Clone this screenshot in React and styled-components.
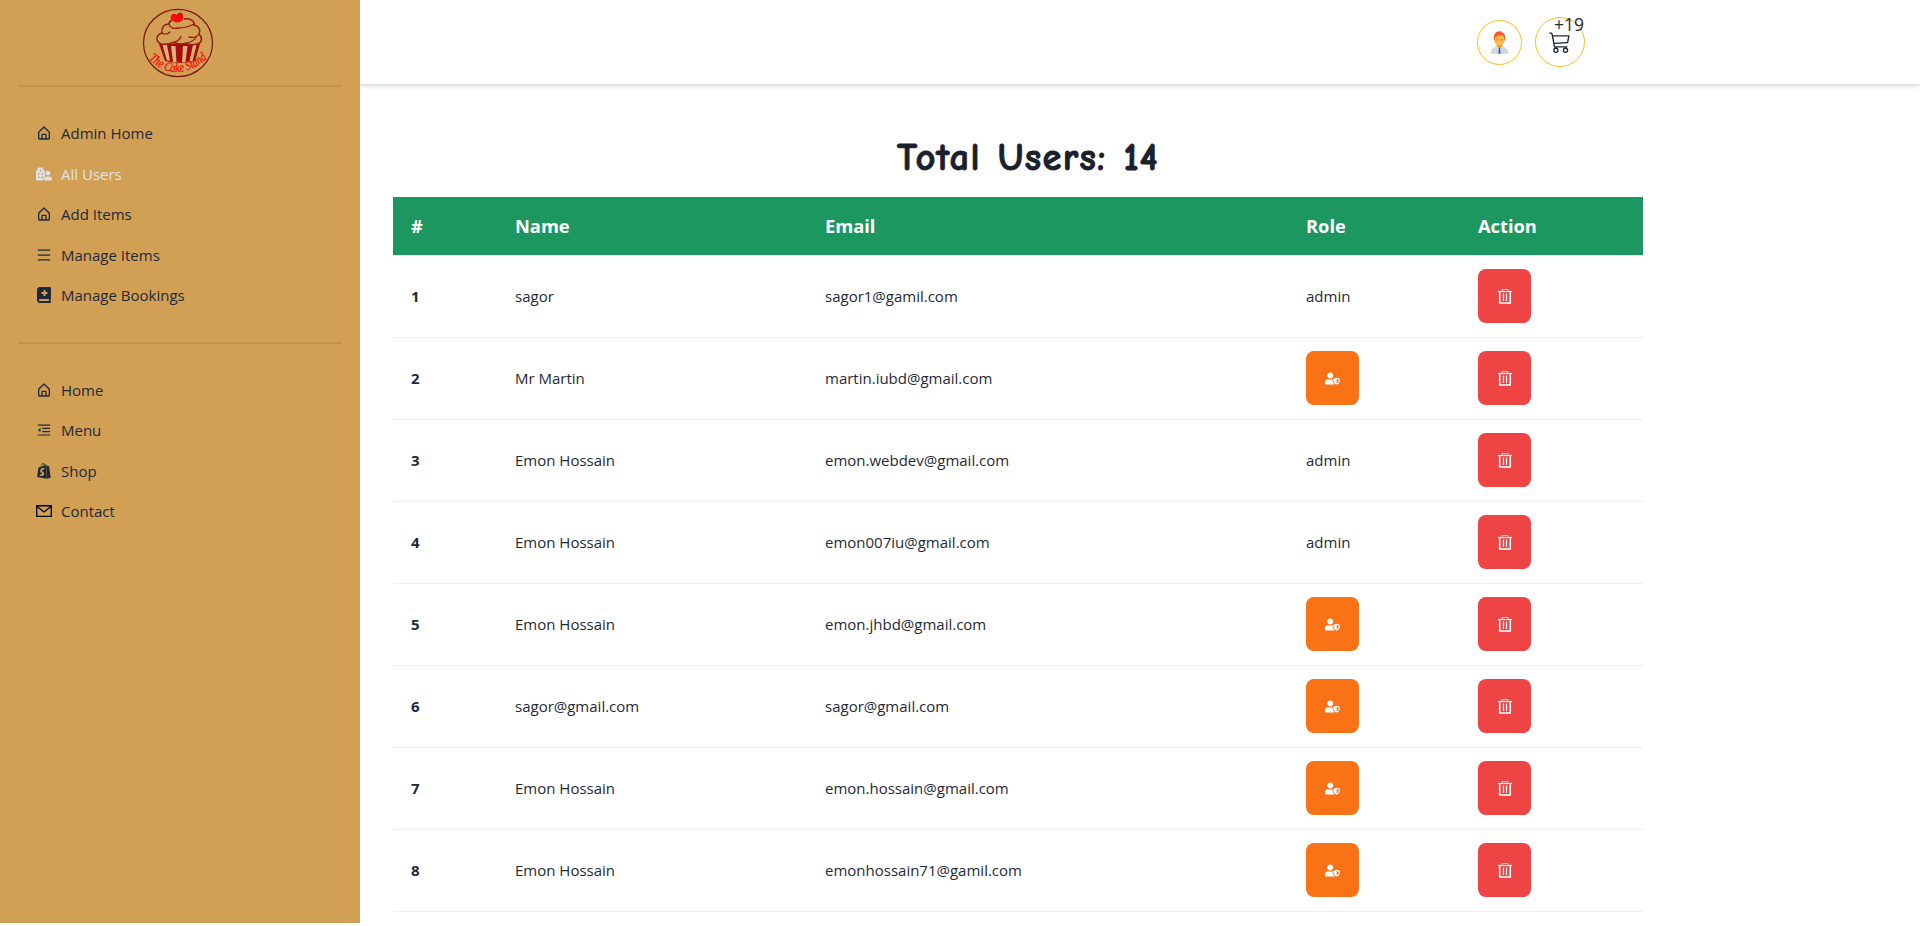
import React from 'react';
import styled, { createGlobalStyle } from 'styled-components';
import { AiOutlineMenu, AiOutlineMenuFold } from 'react-icons/ai';
import { BiHomeAlt } from 'react-icons/bi';
import { BsCart3 } from 'react-icons/bs';
import { FaBookMedical, FaHospitalUser, FaShopify, FaUserShield } from 'react-icons/fa';
import { FcManager } from 'react-icons/fc';

const GlobalStyle = createGlobalStyle`
  * { box-sizing: border-box; }
  body {
    margin: 0;
    height: 926px;
    overflow: hidden;
    background: #fff;
    color: #1f2937;
    font-family: "Segoe UI", "Open Sans", "Noto Sans", sans-serif;
    font-size: 15px;
    line-height: 24px;
  }
`;

const Page = styled.div`
  display: flex;
  align-items: flex-start;
  height: 926px;
  overflow: hidden;
`;

const Sidebar = styled.aside`
  flex: 0 0 360px;
  height: 923px;
  padding: 8px 18px 0;
  background: #d1a054;
`;

const LogoBox = styled.div`
  display: flex;
  justify-content: center;
  height: 77px;
  padding-right: 4px;
`;

const Divider = styled.hr`
  height: 2px;
  margin: 0;
  border: 0;
  background: #bf9451;
`;

const NavList = styled.ul`
  margin: 0;
  padding: 26px 18px;
  list-style: none;
`;

const NavItem = styled.li`
  display: flex;
  align-items: center;
  gap: 9px;
  height: 40.5px;
  color: ${(p) => (p.$active ? '#dfe1ea' : '#1f2937')};

  svg { flex: 0 0 16px; }
`;

const Main = styled.main`
  flex: 1;
  min-width: 0;
`;

const TopBar = styled.header`
  display: flex;
  align-items: center;
  justify-content: flex-end;
  gap: 13px;
  height: 84px;
  padding-right: 335px;
  box-shadow: 0 1px 5px rgba(0, 0, 0, 0.22);
  clip-path: inset(0 0 -10px 0);
`;

const RoundButton = styled.button`
  position: relative;
  display: flex;
  align-items: center;
  justify-content: center;
  width: ${(p) => p.$size}px;
  height: ${(p) => p.$size}px;
  padding: 0;
  border: 1px solid #fbbf24;
  border-radius: 50%;
  background: transparent;
  color: #1f2937;
`;

const Badge = styled.span`
  position: absolute;
  top: -6px;
  right: 0;
  font: 17.500px/24px "Open Sans", sans-serif;
`;

const Content = styled.section`
  width: 1283px;
  padding: 44px 0 0 33px;
`;

const Title = styled.h1`
  margin: 0 0 9px 20px;
  height: 60px;
  font: 700 38.5px/60px "Comic Sans MS", "Comic Neue", "Open Sans", cursive;
  letter-spacing: 1.3px;
  word-spacing: 2px;
  text-align: center;
  color: #1a202c;
  -webkit-text-stroke: 0.9px #1a202c;
`;

const Table = styled.div`
  display: flex;
  flex-direction: column;
`;

const Row = styled.div`
  display: grid;
  grid-template-columns: 104px 310px 481px 172px 1fr;
  align-items: center;
  height: 82px;
  padding-bottom: 1px;
  border-bottom: 1px solid #f0f0f1;

  > * { padding-left: 18px; }
`;

const HeadRow = styled(Row)`
  height: 59px;
  background: #1b975f;
  background-clip: padding-box;
  color: #fff;
  font-size: 18.3px;
  font-weight: 700;
`;

const Index = styled.span`
  font-weight: 700;
`;

const ActionButton = styled.button`
  display: flex;
  align-items: center;
  justify-content: center;
  width: 53px;
  height: 54px;
  padding: 0;
  border: 0;
  border-radius: 8px;
  background: ${(p) => (p.$tone === 'danger' ? '#ef4444' : '#f97316')};
  color: #fff;
`;

const LogoText = styled.text`
  font: italic 400 13px "Liberation Serif", serif;
  fill: #fa0908;
  stroke: #fa0908;
  stroke-width: 0.25px;
`;

const MailIcon = () => (
  <svg width="16" height="16" viewBox="0 0 16 16" fill="none" stroke="#000" strokeWidth="1.35">
    <path d="M.7 2.7h14.6v10.6H.7zM.7 3.2 8 9l7.3-5.8" />
  </svg>
);

const TrashIcon = () => (
  <svg width="16" height="16" viewBox="0 0 16 16" fill="none" stroke="#fff">
    <path d="M5 3V1.500h6V3" strokeOpacity=".7" />
    <path d="M1 3.5h14" strokeWidth="1.2" />
    <path d="M2.700 3.500v11.500h10.600V3.500" strokeWidth="1.500" />
    <path d="M6.500 5.500v7.500M9.500 5.500v7.500" strokeWidth="1.200" />
  </svg>
);

const CakeLogo = () => (
  <svg width="72" height="71" viewBox="0 0 72 71">
    <ellipse cx="36" cy="35" rx="34.5" ry="33.6" fill="none" stroke="#78140f" strokeWidth="1.2" />
    <path d="M17 36h41l-5 17q-15 3.500-30 0z" fill="#a60c0b" />
    <path d="M20.500 37l4.500 15.500h3l-3-15.500zM29 38l2 16h3.500l-1-16zM41 38l-1 16h3.500l2-16zM51 37l-3.500 16h3l4-16z" fill="#dcb27c" />
    <path d="M19 36c-6-3-5-9 1-11c-1-5 2-9 7-9c0-2 1-3 3-4M42 11c6-1 11 2 10 6c5 1 7 5 5 9c4 4 3 9-2 10c-5 2-9 0-12-.5c-5 1-9 0-12-1c-4 2-8 2-12 1.500" fill="#d1a054" stroke="#9b1b12" strokeWidth="1.500" />
    <path d="M20 25c3 2 6 1 8-1M27 16c1 4 5 5 9 4c6 0 11-1 16-4M57 26c-2 3-6 4-10 3M31 34.500c4-1 7-3 8-6M43 35.500c5-1 9-3 11-6" fill="none" stroke="#9b1b12" strokeWidth="1.300" strokeLinecap="round" />
    <path d="M35 14.500c-6-1-8-5-5-8c2-1 4 0 5 .5c1-3 6-3 6 .5c1 4-1 7-6 7z" fill="#fa0908" />
    <path d="M36 8q0-3 3-3" fill="none" stroke="#a60c0b" />
    <path id="logoArc" d="M6.500 51Q35 78 67 49" fill="none" />
    <LogoText>
      <textPath href="#logoArc" textLength="66" lengthAdjust="spacingAndGlyphs">The Cake Stand</textPath>
    </LogoText>
  </svg>
);

const adminLinks = [
  { label: 'Admin Home', icon: BiHomeAlt },
  { label: 'All Users', icon: FaHospitalUser, active: true },
  { label: 'Add Items', icon: BiHomeAlt },
  { label: 'Manage Items', icon: AiOutlineMenu },
  { label: 'Manage Bookings', icon: FaBookMedical },
];

const siteLinks = [
  { label: 'Home', icon: BiHomeAlt },
  { label: 'Menu', icon: AiOutlineMenuFold },
  { label: 'Shop', icon: FaShopify },
  { label: 'Contact', icon: MailIcon },
];

const users = [
  { name: 'sagor', email: 'sagor1@gamil.com', admin: true },
  { name: 'Mr Martin', email: 'martin.iubd@gmail.com' },
  { name: 'Emon Hossain', email: 'emon.webdev@gmail.com', admin: true },
  { name: 'Emon Hossain', email: 'emon007iu@gmail.com', admin: true },
  { name: 'Emon Hossain', email: 'emon.jhbd@gmail.com' },
  { name: 'sagor@gmail.com', email: 'sagor@gmail.com' },
  { name: 'Emon Hossain', email: 'emon.hossain@gmail.com' },
  { name: 'Emon Hossain', email: 'emonhossain71@gamil.com' },
];

const Nav = ({ links }) => (
  <NavList>
    {links.map(({ label, icon: Icon, active }) => (
      <NavItem key={label} $active={active}>
        <Icon size={16} />
        {label}
      </NavItem>
    ))}
  </NavList>
);

export default function App() {
  return (
    <Page>
      <GlobalStyle />
      <Sidebar>
        <LogoBox><CakeLogo /></LogoBox>
        <Divider />
        <Nav links={adminLinks} />
        <Divider />
        <Nav links={siteLinks} />
      </Sidebar>
      <Main>
        <TopBar>
          <RoundButton $size={45}><FcManager size={27} /></RoundButton>
          <RoundButton $size={50}>
            <BsCart3 size={22} />
            <Badge>+19</Badge>
          </RoundButton>
        </TopBar>
        <Content>
          <Title>Total Users: 14</Title>
          <Table>
            <HeadRow>
              <span>#</span>
              <span>Name</span>
              <span>Email</span>
              <span>Role</span>
              <span>Action</span>
            </HeadRow>
            {users.map((user, i) => (
              <Row key={user.email}>
                <Index>{i + 1}</Index>
                <span>{user.name}</span>
                <span>{user.email}</span>
                <div>
                  {user.admin ? 'admin' : <ActionButton><FaUserShield size={15} /></ActionButton>}
                </div>
                <div>
                  <ActionButton $tone="danger"><TrashIcon /></ActionButton>
                </div>
              </Row>
            ))}
          </Table>
        </Content>
      </Main>
    </Page>
  );
}
